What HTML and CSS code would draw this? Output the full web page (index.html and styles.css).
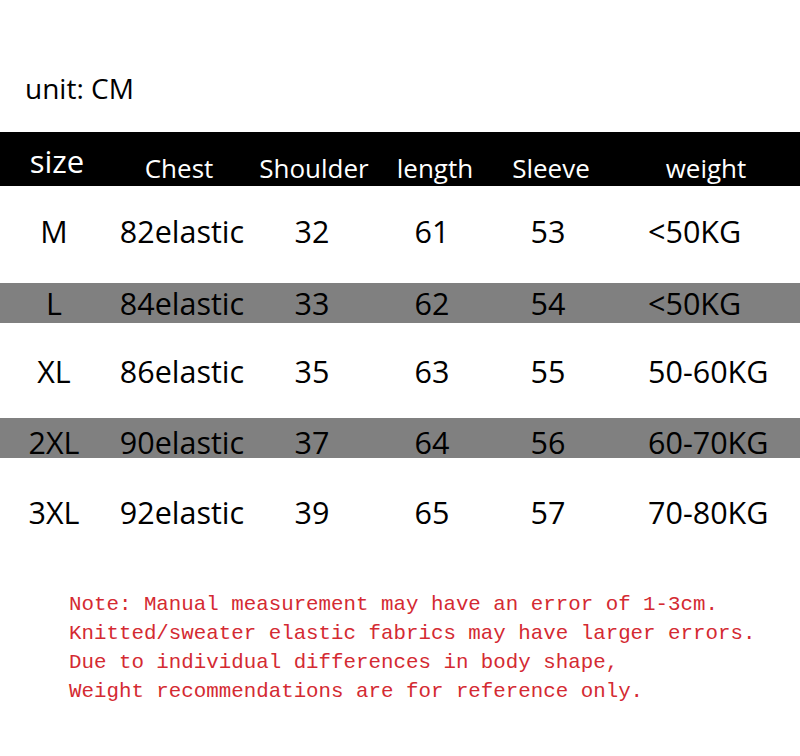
FILE: index.html
```html
<!DOCTYPE html>
<html lang="en">
<head>
<meta charset="utf-8">
<title>Size chart</title>
<link rel="stylesheet" href="styles.css">
</head>
<body>
<div class="page">
  <div class="unit">unit: CM</div>
  <div class="table">
    <div class="head">
      <div class="hcell h-size">size</div>
      <div class="hcell">Chest</div>
      <div class="hcell">Shoulder</div>
      <div class="hcell">length</div>
      <div class="hcell">Sleeve</div>
      <div class="hcell">weight</div>
    </div>
    <div class="row row-m">
      <div class="cell">M</div><div class="cell">82elastic</div><div class="cell">32</div><div class="cell">61</div><div class="cell">53</div><div class="cell w">&lt;50KG</div>
    </div>
    <div class="row row-l gray">
      <div class="cell">L</div><div class="cell">84elastic</div><div class="cell">33</div><div class="cell">62</div><div class="cell">54</div><div class="cell w">&lt;50KG</div>
    </div>
    <div class="row row-xl">
      <div class="cell">XL</div><div class="cell">86elastic</div><div class="cell">35</div><div class="cell">63</div><div class="cell">55</div><div class="cell w">50-60KG</div>
    </div>
    <div class="row row-2xl gray">
      <div class="cell">2XL</div><div class="cell">90elastic</div><div class="cell">37</div><div class="cell">64</div><div class="cell">56</div><div class="cell w">60-70KG</div>
    </div>
    <div class="row row-3xl">
      <div class="cell">3XL</div><div class="cell">92elastic</div><div class="cell">39</div><div class="cell">65</div><div class="cell">57</div><div class="cell w">70-80KG</div>
    </div>
  </div>
  <div class="note">
    <p>Note: Manual measurement may have an error of 1-3cm.</p>
    <p>Knitted/sweater elastic fabrics may have larger errors.</p>
    <p>Due to individual differences in body shape,</p>
    <p>Weight recommendations are for reference only.</p>
  </div>
</div>
</body>
</html>
```
FILE: styles.css
```css
html, body {
  margin: 0;
  padding: 0;
  background: #ffffff;
}
.page {
  width: 800px;
  height: 756px;
  overflow: hidden;
  font-family: "Open Sans", "Noto Sans", sans-serif;
  color: #000;
}
.unit {
  padding: 68px 0 0 25px;
  font-size: 28px;
  line-height: 40px;
  margin-bottom: 24px;
}
.head {
  display: grid;
  grid-template-columns: 114px 130px 140px 102px 130px 180px;
  height: 54px;
  background: #000;
  color: #fff;
  align-items: center;
}
.hcell {
  text-align: center;
  font-size: 26px;
  line-height: 30px;
  padding-top: 18px;
}
.hcell.h-size {
  font-size: 31px;
  padding-top: 4px;
}
.row {
  display: grid;
  grid-template-columns: 108px 148px 112px 128px 104px 200px;
  align-items: center;
  font-size: 30.5px;
  line-height: 40px;
}
.cell {
  text-align: center;
}
.cell.w {
  text-align: left;
  padding-left: 48px;
}
.gray {
  background: #808080;
}
.row-m { height: 89px; padding-bottom: 8px; }
.row-l { height: 40px; }
.row-xl { height: 95px; }
.row-2xl { height: 36px; padding-top: 4px; }
.row-3xl { height: 108px; }
.note {
  margin: 24px 0 0 69px;
  font-family: "Liberation Mono", "DejaVu Sans Mono", monospace;
  font-size: 20.8px;
  line-height: 29px;
  color: #d42a32;
}
.note p {
  margin: 0;
  white-space: pre;
}
```
